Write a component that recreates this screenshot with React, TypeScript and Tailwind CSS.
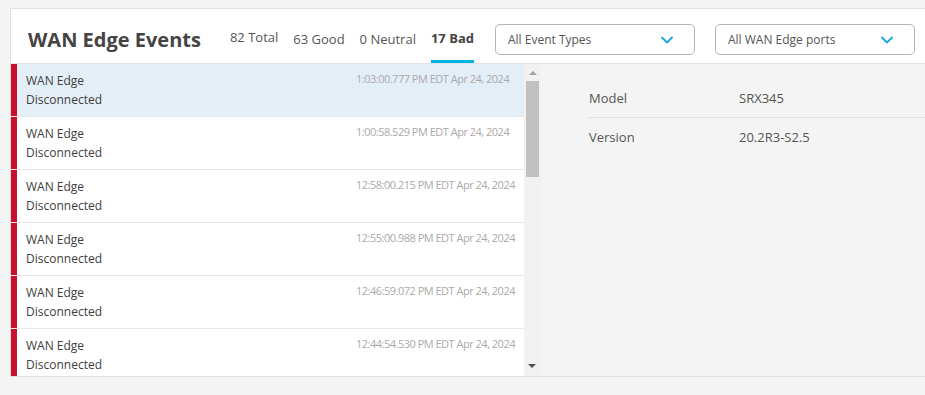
import React from "react";

const rows = [
  "1:03:00.777 PM EDT Apr 24, 2024",
  "1:00:58.529 PM EDT Apr 24, 2024",
  "12:58:00.215 PM EDT Apr 24, 2024",
  "12:55:00.988 PM EDT Apr 24, 2024",
  "12:46:59.072 PM EDT Apr 24, 2024",
  "12:44:54.530 PM EDT Apr 24, 2024",
];

function Chevron() {
  return (
    <svg width="12" height="8" viewBox="0 0 12 8" fill="none">
      <path d="M1 1.5L6 6.5L11 1.5" stroke="#1ba5e0" strokeWidth="1.8" strokeLinecap="round" strokeLinejoin="round" />
    </svg>
  );
}

function Select({ label }: { label: string }) {
  return (
    <div className="flex h-[31px] w-[200px] items-center justify-between rounded-[5px] border border-[#b5b5b5] bg-white pl-[12px] pr-[21px] text-[12px] text-[#555]">
      <span>{label}</span>
      <Chevron />
    </div>
  );
}

export default function App() {
  return (
    <div
      className="h-[395px] w-[925px] overflow-hidden bg-[#f4f4f4] pl-[10px] pt-[8px]"
      style={{ fontFamily: '"Open Sans", "Noto Sans", sans-serif' }}
    >
      <div className="w-[940px] border border-[#e0e0e0] bg-white">
        {/* header */}
        <div className="flex h-[55px] items-stretch border-b border-[#e3e3e3]">
          <div className="flex items-center pl-[17px] pr-[29px] pt-[8px] text-[20px] font-bold text-[#444]">
            WAN Edge Events
          </div>
          <div className="flex items-stretch gap-[15px] text-[13px] text-[#555]">
            <div className="flex items-center pt-[4px]">82 Total</div>
            <div className="flex items-center pt-[8px]">63 Good</div>
            <div className="flex items-center pt-[8px]">0 Neutral</div>
            <div className="flex flex-col justify-end">
              <div className="flex flex-1 items-center pt-[8px] font-bold text-[#444]">17 Bad</div>
              <div className="h-[3px] bg-[#00b2e5]" />
            </div>
          </div>
          <div className="ml-[21px] flex items-center gap-[20px] pt-[7px]">
            <Select label="All Event Types" />
            <Select label="All WAN Edge ports" />
          </div>
        </div>
        {/* body */}
        <div className="flex h-[312px] bg-[#f4f4f4]">
          <div className="flex h-[312px] w-[513px] flex-col overflow-hidden bg-white">
            {rows.map((t, i) => (
              <div
                key={t}
                className={`flex h-[53px] shrink-0 border-b border-[#e8e8e8] ${i === 0 ? "bg-[#e4eef7]" : "bg-white"}`}
              >
                <div className="w-[6px] shrink-0 bg-[#c8102e]" />
                <div className="flex flex-1 justify-between pl-[9px] pt-[7px]">
                  <div className="text-[12px] leading-[19px] text-[#3e3e3e]">
                    <div>WAN Edge</div>
                    <div>Disconnected</div>
                  </div>
                  <div className="w-[168px] whitespace-nowrap text-[11px] leading-[16px] tracking-[-0.5px] text-[#aaa]">
                    {t}
                  </div>
                </div>
              </div>
            ))}
          </div>
          {/* scrollbar */}
          <div className="relative h-[312px] w-[17px] bg-[#f1f1f1]">
            <div className="absolute left-[5px] top-[7px] h-0 w-0 border-x-[4px] border-b-[4px] border-x-transparent border-b-[#a3a3a3]" />
            <div className="absolute left-[2px] top-[17px] h-[96px] w-[13px] bg-[#c1c1c1]" />
            <div className="absolute bottom-[8px] left-[4px] h-0 w-0 border-x-[4px] border-t-[4px] border-x-transparent border-t-[#505050]" />
          </div>
          {/* detail panel */}
          <div className="flex-1 pl-[48px] pt-[15px] text-[13px]">
            <div className="flex h-[39px] items-center border-b border-[#e0e0e0] pt-[2px]">
              <div className="w-[150px] font-medium text-[#555]">Model</div>
              <div className="text-[#555]">SRX345</div>
            </div>
            <div className="flex h-[39px] items-center">
              <div className="w-[150px] font-medium text-[#555]">Version</div>
              <div className="text-[#555]">20.2R3-S2.5</div>
            </div>
          </div>
        </div>
      </div>
    </div>
  );
}
